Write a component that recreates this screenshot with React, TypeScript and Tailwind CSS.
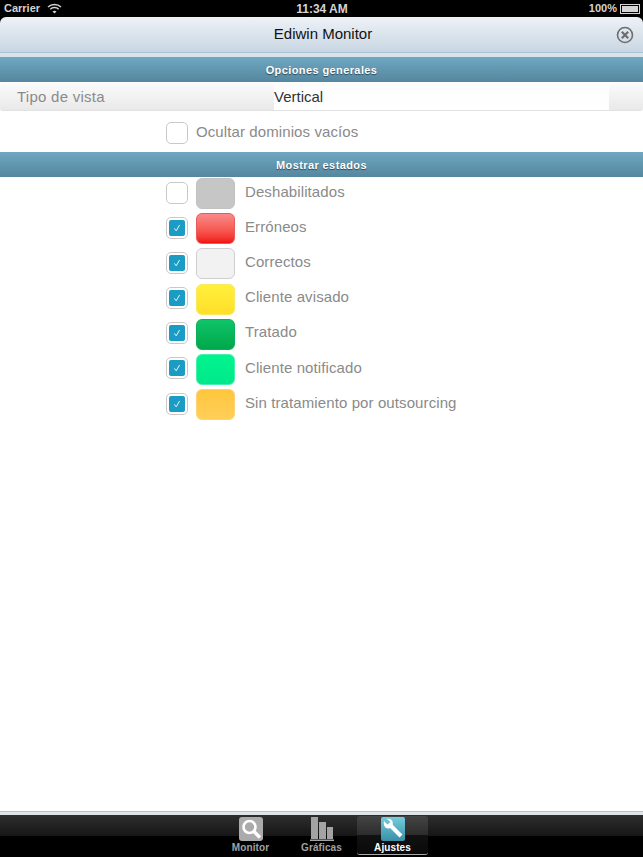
const FONT = "font-['Liberation_Sans',Arial,sans-serif]";

const estados = [
  { label: "Deshabilitados", on: false, swatch: "bg-[#c6c6c6] border-[#c2c2c2]" },
  { label: "Erróneos", on: true, swatch: "bg-gradient-to-b from-[#f98a8a] to-[#f00e0e] border-[#ea5a5a]" },
  { label: "Correctos", on: true, swatch: "bg-[#f2f2f2] border-[#cfcfcf]" },
  { label: "Cliente avisado", on: true, swatch: "bg-gradient-to-b from-[#fff03a] to-[#ffdf2a] border-[#fbe85c]" },
  { label: "Tratado", on: true, swatch: "bg-gradient-to-b from-[#10c468] to-[#00a84a] border-[#0cae58]" },
  { label: "Cliente notificado", on: true, swatch: "bg-gradient-to-b from-[#00f58f] to-[#00e88a] border-[#48f0ad]" },
  { label: "Sin tratamiento por outsourcing", on: true, swatch: "bg-gradient-to-b from-[#ffc63c] to-[#ffcf58] border-[#fbd27a]" },
];

function Check({ on }: { on: boolean }) {
  return (
    <div className="w-[22px] h-[22px] shrink-0 rounded-[5px] border border-[#c9c9c9] bg-white flex items-center justify-center">
      {on && (
        <div className="w-[16px] h-[16px] rounded-[2px] bg-[#1a9cc4] flex items-center justify-center">
          <svg width="10" height="10" viewBox="0 0 10 10" fill="none">
            <path d="M2.4 5.4 L4.2 7.8 L7.6 2" stroke="#e8f6fb" strokeWidth="1" />
          </svg>
        </div>
      )}
    </div>
  );
}

function SectionBar({ title }: { title: string }) {
  return (
    <div className="h-[25px] pt-[1px] bg-gradient-to-b from-[#6fa7c1] to-[#55879f] flex items-center justify-center text-[11px] font-bold text-white [text-shadow:0_1px_1px_rgba(0,0,0,0.5)] tracking-[0.4px]">
      {title}
    </div>
  );
}

function StatusBar() {
  return (
    <div className="h-[17px] bg-black text-[#d4d4d4] text-[11px] font-bold flex items-center justify-between pl-[4px] pr-[3px]">
      <div className="flex items-center gap-[7px] w-[120px]">
        <span>Carrier</span>
        <svg width="15" height="11" viewBox="0 0 15 11" fill="none" stroke="#d4d4d4" strokeWidth="1.5">
          <path d="M1 4 C4.5 0.5 10.5 0.5 14 4" />
          <path d="M3.3 6.2 C5.5 4 9.5 4 11.7 6.2" />
          <path d="M7.5 10.5 L5.5 8.4 C6.6 7.4 8.4 7.4 9.5 8.4 Z" fill="#d4d4d4" stroke="none" />
        </svg>
      </div>
      <span className="text-[12px]">11:34 AM</span>
      <div className="flex items-center justify-end gap-[3px] w-[120px]">
        <span>100%</span>
        <div className="w-[20px] h-[10px] border border-[#d4d4d4] p-[1px]">
          <div className="w-full h-full bg-[#d4d4d4]" />
        </div>
      </div>
    </div>
  );
}

function TabItem({ label, active, children }: { label: string; active?: boolean; children: React.ReactNode }) {
  return (
    <div
      className={`w-[71px] h-[39px] flex flex-col items-center rounded-[3px] ${
        active ? "bg-[linear-gradient(#444,#2c2c2c_50%,#111_50%,#0a0a0a)] border-b border-[#aaa]" : ""
      }`}
    >
      <div className="h-[25px] flex items-end justify-center">{children}</div>
      <span className={`text-[10px] font-bold leading-[13px] tracking-[0.1px] ${active ? "text-white" : "text-[#a2a2a2]"}`}>{label}</span>
    </div>
  );
}

export default function App() {
  return (
    <div className={`${FONT} w-[643px] h-[857px] flex flex-col bg-white overflow-hidden`}>
      <StatusBar />
      <div className="bg-black">
        <div className="h-[35px] pl-[3px] rounded-t-[6px] bg-gradient-to-b from-[#edf2f7] to-[#c9d6e2] flex items-center justify-center relative text-[15px] text-[#111]">
          Ediwin Monitor
          <svg className="absolute right-[9px] top-[9px]" width="18" height="18" viewBox="0 0 18 18" fill="none" stroke="#6d6d6d">
            <circle cx="9" cy="9" r="7.5" strokeWidth="1.6" />
            <path d="M5.8 5.8 L12.2 12.2 M12.2 5.8 L5.8 12.2" strokeWidth="2.2" />
          </svg>
        </div>
      </div>
      <div className="h-[5px] bg-[#d9e3ec] border-t border-[#a9c3d3]" />
      <SectionBar title="Opciones generales" />

      <div className="h-[28px] flex rounded-[3px] bg-gradient-to-b from-[#fbfbfb] to-[#e9e9e9] border-b border-[#e2e2e2] mt-[1px]">
        <div className="w-[274px] pl-[17px] pt-[2px] flex items-center text-[15px] text-[#8a8a8a] tracking-[0.25px]">Tipo de vista</div>
        <div className="w-[335px] pt-[2px] bg-gradient-to-b from-[#fcfcfc] to-[#ffffff] flex items-center text-[15px] text-[#333]">Vertical</div>
      </div>

      <div className="h-[41px] pl-[166px] flex items-center gap-[8px] text-[15px] text-[#8a8a8a] tracking-[0.1px] pt-[2px]">
        <Check on={false} />
        <span>Ocultar dominios vacíos</span>
      </div>

      <SectionBar title="Mostrar estados" />

      <div className="flex flex-col gap-[4px] pl-[166px] pt-[1px]">
        {estados.map((e) => (
          <div key={e.label} className="h-[31.17px] flex items-center">
            <div className="pb-[2px]">
              <Check on={e.on} />
            </div>
            <div className={`w-[39px] h-[31px] ml-[8px] rounded-[6px] border ${e.swatch}`} />
            <span className="ml-[10px] pb-[3px] text-[15px] text-[#8a8a8a] tracking-[0.1px]">{e.label}</span>
          </div>
        ))}
      </div>

      <div className="flex-1" />

      <div className="h-[4px] bg-[#dfe4e8] border-t border-[#b9c0c6]" />
      <div className="h-[42px] bg-[linear-gradient(#2e2e2e,#161616_50%,#000_50%,#000)] flex justify-center items-start pt-[1px]">
        <TabItem label="Monitor">
          <svg width="24" height="24" viewBox="0 0 24 24">
            <rect width="24" height="24" rx="3" fill="#ababab" />
            <circle cx="10.5" cy="10" r="6" fill="none" stroke="#fff" strokeWidth="2.6" />
            <path d="M15 14.5 L21 20.5" stroke="#fff" strokeWidth="3.4" />
          </svg>
        </TabItem>
        <TabItem label="Gráficas">
          <svg width="24" height="24" viewBox="0 0 24 24" fill="#a3a3a3">
            <rect x="1" y="0" width="7" height="22" />
            <rect x="9" y="5" width="7" height="17" />
            <rect x="17" y="10" width="6" height="12" />
            <rect x="0" y="22.5" width="24" height="1.5" />
          </svg>
        </TabItem>
        <TabItem label="Ajustes" active>
          <svg width="24" height="24" viewBox="0 0 24 24">
            <defs>
              <linearGradient id="ajustes" x1="0" y1="0" x2="0" y2="1">
                <stop offset="0" stopColor="#74cddc" />
                <stop offset="1" stopColor="#3a8fa8" />
              </linearGradient>
            </defs>
            <rect width="24" height="24" rx="2" fill="url(#ajustes)" />
            <path d="M9 8 L20 19" stroke="#fff" strokeWidth="4" />
            <path d="M3 4 L6.5 7.5 L9.5 5 L6 2 C9.5 1 13 4 11.5 8.5 L8.5 11.5 C4 12 2 8 3 4 Z" fill="#fff" />
          </svg>
        </TabItem>
      </div>
    </div>
  );
}
